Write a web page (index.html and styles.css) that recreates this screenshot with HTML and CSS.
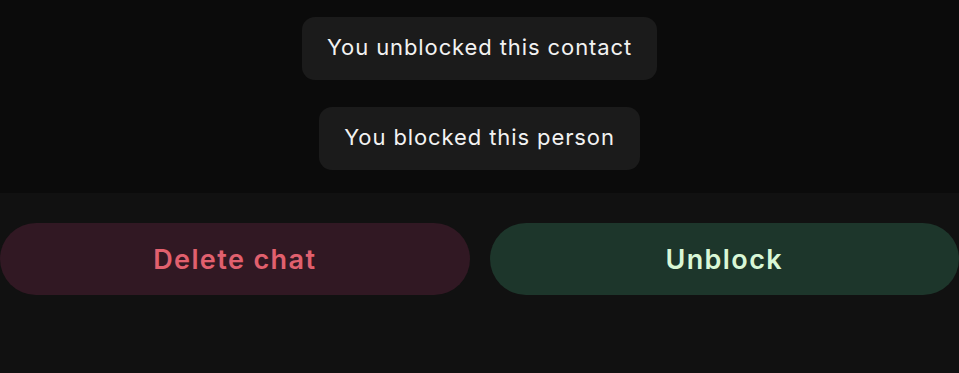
FILE: index.html
```html
<!DOCTYPE html>
<html>
<head>
<meta charset="utf-8">
<link rel="stylesheet" href="styles.css">
</head>
<body>
<div class="messages">
  <div class="chip">You unblocked this contact</div>
  <div class="chip">You blocked this person</div>
</div>
<div class="actions">
  <button class="btn btn-delete">Delete chat</button>
  <button class="btn btn-unblock">Unblock</button>
</div>
</body>
</html>
```
FILE: styles.css
```css
html, body {
  margin: 0;
  padding: 0;
  background: #111111;
  font-family: Inter, "Noto Sans", sans-serif;
  width: 959px;
  height: 373px;
  overflow: hidden;
}
.messages {
  background: #0b0b0b;
  height: 193px;
  box-sizing: border-box;
  padding-top: 17px;
  display: flex;
  flex-direction: column;
  align-items: center;
  gap: 27px;
}
.chip {
  background: #1b1b1b;
  color: #f2f2f2;
  height: 63px;
  box-sizing: border-box;
  padding: 0 25px 3px;
  border-radius: 13px;
  display: flex;
  align-items: center;
  font-size: 22px;
  letter-spacing: 0.9px;
  font-weight: 400;
}
.actions {
  display: flex;
  gap: 20px;
  padding-top: 30px;
}
.btn {
  flex: 1;
  height: 72px;
  border: none;
  border-radius: 36px;
  font-family: Inter, "Noto Sans", sans-serif;
  font-size: 27px;
  letter-spacing: 1.4px;
  font-weight: 600;
  display: flex;
  align-items: center;
  justify-content: center;
  padding: 0;
}
.btn-delete {
  background: #311823;
  color: #e1606e;
}
.btn-unblock {
  background: #1d362b;
  color: #d9f7d6;
}
```
